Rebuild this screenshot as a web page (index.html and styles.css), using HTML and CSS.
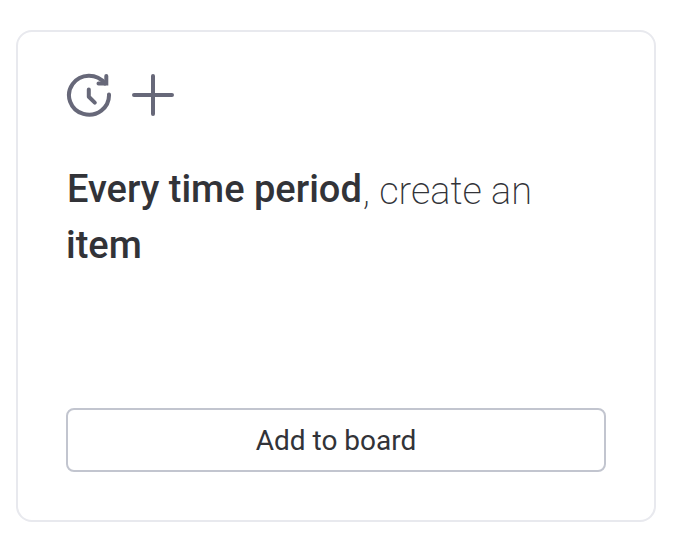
FILE: index.html
```html
<!DOCTYPE html>
<html lang="en">
<head>
    <meta charset="UTF-8">
    <meta name="viewport" content="width=device-width, initial-scale=1.0">
    <title>Automation recipe</title>
    <link rel="stylesheet" href="styles.css">
</head>
<body>
    <div class="card">
        <div class="icons">
            <svg class="icon" viewBox="0 0 46 46" aria-hidden="true">
                <path d="M43 22.5A20 19.5 0 1 1 39 11.5"/>
                <path d="M40.3 4V11.6H32.5" stroke-linejoin="miter"/>
                <path d="M22.8 17.5V24.8L28.8 30.6"/>
            </svg>
            <svg class="icon" viewBox="0 0 46 46" aria-hidden="true">
                <path d="M23 4V42M4 23H42"/>
            </svg>
        </div>
        <h2 class="sentence"><strong>Every time period</strong>, create an <strong>item</strong></h2>
        <button type="button" class="addBtn">Add to board</button>
    </div>
</body>
</html>
```
FILE: styles.css
```css
body {
    margin: 30px 28px 30px 16px;
    background-color: #fff;
    color: #323338;
    font-family: Roboto, sans-serif;
}

.card {
    display: flex;
    flex-direction: column;
    padding: 40px 48px 48px;
    border: 2px solid #e8e9ee;
    border-radius: 16px;
}

.icons {
    display: flex;
    gap: 18px;
}

.icon {
    width: 46px;
    height: 46px;
    fill: none;
    stroke: #676879;
    stroke-width: 4;
    stroke-linecap: round;
    stroke-linejoin: round;
}

.sentence {
    min-height: 192px;
    margin: 45px 0 53px;
    font-size: 38px;
    font-weight: 200;
    line-height: 56px;
}

.sentence strong {
    font-weight: 500;
    line-height: 1;
    vertical-align: 2px;
}

.sentence strong:first-child {
    padding: 0 1px;
}

.addBtn {
    height: 64px;
    border: 2px solid #c2c5cf;
    border-radius: 8px;
    background-color: #fff;
    color: #323338;
    font-family: inherit;
    font-size: 28px;
    cursor: pointer;
}
```
